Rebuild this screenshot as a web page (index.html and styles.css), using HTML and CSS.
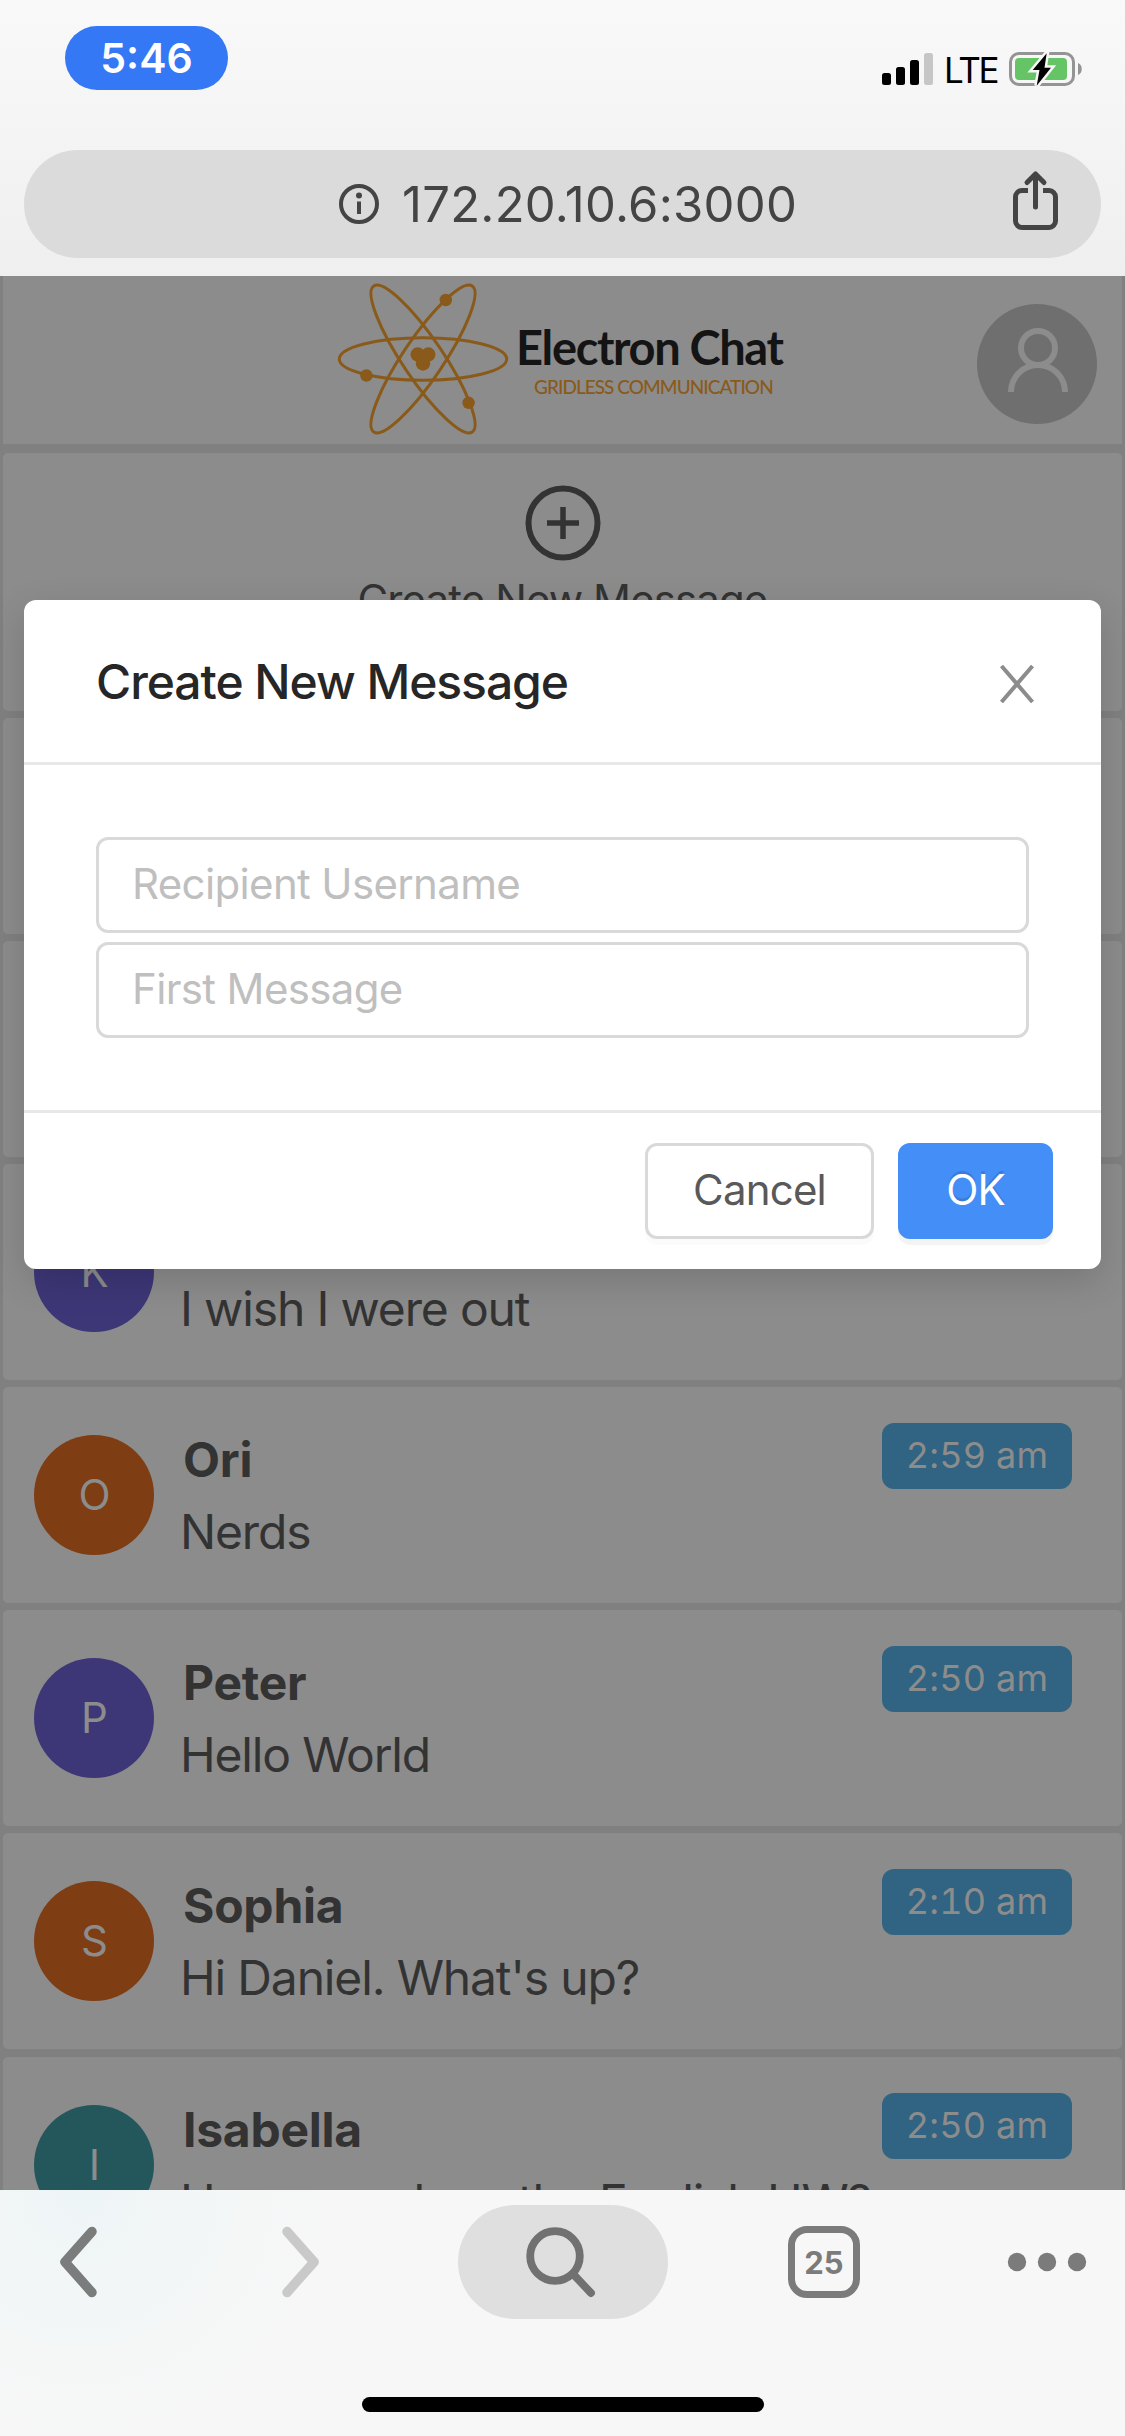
FILE: index.html
```html
<!DOCTYPE html>
<html lang="en">
<head>
<meta charset="utf-8">
<title>Electron Chat</title>
<link rel="stylesheet" href="styles.css">
</head>
<body>
<div class="phone">
  <header class="chrome">
    <div class="status">
      <span class="clock">5:46</span>
      <div class="status-right">
        <svg class="signal" width="52" height="34" viewBox="0 0 52 34">
          <rect x="0" y="21" width="9" height="12" rx="2.500"/>
          <rect x="14" y="15" width="9" height="18" rx="2.500"/>
          <rect x="28" y="8" width="9" height="25" rx="2.500"/>
          <rect x="42" y="1" width="9" height="32" rx="2.500" fill="#c6c6c6"/>
        </svg>
        <span class="lte">LTE</span>
        <svg class="battery" width="74" height="36" viewBox="0 0 74 36">
          <rect x="1.500" y="2.500" width="63" height="31" rx="8.500" fill="none" stroke="#949494" stroke-width="3"/>
          <path d="M69 12c5 1.500 5 10.500 0 12z" fill="#949494"/>
          <rect x="6" y="7" width="52" height="22" rx="4" fill="#65c466"/>
          <path d="M37.700 2.300L23.700 19H30.500L27.700 34.700L42 16.700H35.500Z" fill="#000" stroke="#f7f7f7" stroke-width="5" paint-order="stroke"/>
        </svg>
      </div>
    </div>
    <div class="urlbar">
      <svg class="info" width="42" height="42" viewBox="0 0 42 42">
        <circle cx="21" cy="21" r="18" fill="none" stroke="#444" stroke-width="4"/>
        <circle cx="21" cy="12.500" r="3" fill="#444"/>
        <path d="M21 18.500v12.500" stroke="#444" stroke-width="4"/>
      </svg>
      <span class="url">172.20.10.6:3000</span>
      <svg class="share" width="48" height="62" viewBox="0 0 48 62" fill="none" stroke="#444" stroke-width="5">
        <path d="M17 20.500H11a6.500 6.500 0 0 0-6.500 6.500v24a6.500 6.500 0 0 0 6.500 6.500h27a6.500 6.500 0 0 0 6.500-6.500V27a6.500 6.500 0 0 0-6.500-6.500H32"/>
        <path d="M24.500 37V4M16 12.500L24.500 4l8.500 8.500" stroke-linecap="round" stroke-linejoin="round"/>
      </svg>
    </div>
  </header>

  <main class="page">
    <div class="brandbar">
      <div class="brand">
        <svg class="atom" width="172" height="154" viewBox="-86 -77 172 154">
          <g fill="none" stroke="#8a5a1a" stroke-width="3">
            <ellipse rx="83.700" ry="21.300"/>
            <ellipse rx="88" ry="20.200" transform="rotate(56)"/>
            <ellipse rx="88" ry="20.200" transform="rotate(-56)"/>
          </g>
          <g fill="#8a5a1a">
            <circle cx="22.800" cy="-59" r="6.200"/>
            <circle cx="-56.600" cy="16.500" r="6.200"/>
            <circle cx="45.600" cy="43.800" r="6.200"/>
            <circle cx="-5.300" cy="-4.500" r="7.200"/>
            <circle cx="5.300" cy="-4.500" r="7.200"/>
            <circle cx="0" cy="4.500" r="7.200"/>
          </g>
        </svg>
        <div class="brand-words">
          <div class="brand-name">Electron Chat</div>
          <div class="brand-tag">GRIDLESS COMMUNICATION</div>
        </div>
      </div>
      <svg class="profile" width="120" height="120" viewBox="0 0 120 120">
        <circle cx="60" cy="60" r="60" fill="#6f6f6f"/>
        <g fill="none" stroke="#8c8c8c" stroke-width="6">
          <circle cx="61" cy="44" r="17"/>
          <path d="M34 88a27 27 0 0 1 54 0"/>
        </g>
      </svg>
    </div>

    <section class="card create">
      <svg width="76" height="76" viewBox="0 0 76 76">
        <circle cx="38" cy="38" r="34.500" fill="none" stroke="#333" stroke-width="6"/>
        <path d="M22 38h32M38 22v32" stroke="#333" stroke-width="5.500"/>
      </svg>
      <div class="create-label">Create New Message</div>
    </section>

    <section class="card"></section>
    <section class="card"></section>
    <section class="card">
      <div class="avatar purple">K</div>
      <div class="text"><div class="name">Kevin</div><div class="msg">I wish I were out</div></div>
    </section>
    <section class="card">
      <div class="avatar orange">O</div>
      <div class="text"><div class="name">Ori</div><div class="msg">Nerds</div></div>
      <div class="time">2:59 am</div>
    </section>
    <section class="card">
      <div class="avatar purple">P</div>
      <div class="text"><div class="name">Peter</div><div class="msg">Hello World</div></div>
      <div class="time">2:50 am</div>
    </section>
    <section class="card">
      <div class="avatar orange">S</div>
      <div class="text"><div class="name">Sophia</div><div class="msg">Hi Daniel. What's up?</div></div>
      <div class="time">2:10 am</div>
    </section>
    <section class="card last">
      <div class="avatar teal">I</div>
      <div class="text"><div class="name">Isabella</div><div class="msg">Have you done the English HW?</div></div>
      <div class="time">2:50 am</div>
    </section>
  </main>

  <div class="modal">
    <div class="modal-head">
      <div class="modal-title">Create New Message</div>
      <svg class="close" width="36" height="38" viewBox="0 0 36 38">
        <path d="M2.500 1L33.500 37M33.500 1L2.500 37" stroke="#8c8c8c" stroke-width="4"/>
      </svg>
    </div>
    <div class="modal-body">
      <input class="field" placeholder="Recipient Username">
      <input class="field" placeholder="First Message">
    </div>
    <div class="modal-foot">
      <button class="btn cancel">Cancel</button>
      <button class="btn ok">OK</button>
    </div>
  </div>

  <footer class="toolbar">
    <div class="tools">
      <svg class="back" width="41" height="74" viewBox="0 0 41 74"><path d="M34 6.500L7 37l27 30.500" fill="none" stroke="#7b7d7c" stroke-width="9.500" stroke-linecap="round" stroke-linejoin="round"/></svg>
      <svg class="forward" width="41" height="74" viewBox="0 0 41 74"><path d="M7 6.500L34 37L7 67.500" fill="none" stroke="#c9c9c9" stroke-width="9.500" stroke-linecap="round" stroke-linejoin="round"/></svg>
      <div class="search">
        <svg width="72" height="72" viewBox="0 0 72 72"><g fill="none" stroke="#717171" stroke-width="7.800" stroke-linecap="round"><circle cx="30" cy="30" r="24.800"/><path d="M49 49l17 18"/></g></svg>
      </div>
      <div class="tabs">25</div>
      <svg class="more" width="80" height="20" viewBox="0 0 80 20" fill="#7b7b7b"><circle cx="10" cy="10" r="9.200"/><circle cx="40" cy="10" r="9.200"/><circle cx="70" cy="10" r="9.200"/></svg>
    </div>
    <div class="home"></div>
  </footer>
</div>
</body>
</html>
```

FILE: styles.css
```css
* { box-sizing: border-box; }

body {
  margin: 0;
  font-family: Inter, "Liberation Sans", sans-serif;
  color: #333;
}

.phone {
  position: relative;
  display: flex;
  flex-direction: column;
  width: 1125px;
  height: 2436px;
  overflow: hidden;
  background: #f7f7f7;
}

/* Browser chrome */
.chrome {
  flex: 0 0 276px;
  padding: 26px 24px 0;
  background: linear-gradient(#f9f9f9, #efefef);
}
.status {
  display: flex;
  justify-content: space-between;
  height: 124px;
  padding: 0 18px 0 41px;
}
.clock {
  width: 163px;
  height: 64px;
  border-radius: 32px;
  background: #3478f6;
  color: #fff;
  font-size: 41px;
  font-weight: 600;
  line-height: 64px;
  text-align: center;
}
.status-right {
  display: flex;
  align-items: flex-start;
  padding-top: 26px;
}
.lte {
  width: 57px;
  margin: 0 8px 0 10px;
  font-size: 35px;
  line-height: 37px;
  letter-spacing: -2.2px;
  color: #000;
}
.battery { margin-top: -1px; }
.urlbar {
  display: flex;
  align-items: center;
  height: 108px;
  padding: 0 42px 0 314px;
  border-radius: 54px;
  background: #dbdbdb;
}
.url {
  margin-left: 22px;
  font-size: 49px;
  letter-spacing: .25px;
  color: #444;
}
.share { margin: -6px 0 0 auto; }

/* Chat list */
.page {
  display: flex;
  flex: 1 1 0;
  flex-direction: column;
  gap: 7px;
  min-height: 0;
  overflow: hidden;
  padding: 0 3px;
  background: #808080;
}
.brandbar {
  display: flex;
  flex: 0 0 168px;
  justify-content: space-between;
  margin-bottom: 2px;
  padding-right: 25px;
  background: #8c8c8c;
}
.brand {
  display: flex;
  align-items: flex-start;
  padding: 6px 0 0 334px;
}
.brand-words {
  padding: 37px 0 0 7px;
  font-family: Lato, sans-serif;
  white-space: nowrap;
}
.brand-name {
  font-size: 47px;
  font-weight: 700;
  line-height: 56px;
  letter-spacing: -1.35px;
  color: #141414;
}
.brand-tag {
  padding-left: 18px;
  font-size: 19px;
  font-weight: 500;
  line-height: 24px;
  letter-spacing: -.95px;
  color: #8a5a1a;
}
.profile { margin-top: 28px; }
.card {
  display: flex;
  flex: 0 0 216px;
  align-items: flex-start;
  padding: 48px 50px 0 31px;
  border-radius: 5px;
  background: #8c8c8c;
}
.card.last { margin-top: 1px; }
.card.create {
  flex-basis: 258px;
  flex-direction: column;
  align-items: center;
  padding: 32px 0 0;
}
.create-label {
  margin-top: 13px;
  font-size: 42px;
  line-height: 52px;
  letter-spacing: -.9px;
}
.avatar {
  flex: 0 0 120px;
  height: 120px;
  border-radius: 50%;
  color: #8c8c8c;
  font-size: 42px;
  line-height: 120px;
  text-align: center;
  letter-spacing: -1px;
}
.purple { background: #3d3777; }
.orange { background: #7e3d13; }
.teal { background: #24575c; }
.text {
  flex: 1;
  min-width: 0;
  padding: 0 0 0 26px;
  white-space: nowrap;
}
.name {
  padding-left: 3px;
  margin-top: -5px;
  font-size: 48px;
  font-weight: 700;
  line-height: 60px;
  letter-spacing: -.25px;
}
.msg {
  margin-top: 12px;
  font-size: 48px;
  line-height: 60px;
  letter-spacing: -1.15px;
}
.time {
  flex: 0 0 190px;
  height: 66px;
  margin-top: -12px;
  border-radius: 12px;
  background: #306482;
  color: #8c8c8c;
  font-size: 36px;
  font-variant-numeric: tabular-nums;
  line-height: 65px;
  letter-spacing: .2px;
  text-align: center;
}

/* Dialog floats over the dimmed page */
.modal {
  position: absolute;
  top: 600px;
  left: 24px;
  display: flex;
  flex-direction: column;
  width: 1077px;
  height: 669px;
  border-radius: 12px;
  background: #fff;
  box-shadow: 0 12px 36px rgba(0, 0, 0, .15);
}
.modal-head {
  display: flex;
  flex: 0 0 165px;
  align-items: center;
  justify-content: space-between;
  padding: 0 66px 0 72px;
  border-bottom: 3px solid #e8e8e8;
}
.modal-title {
  font-size: 48px;
  font-weight: 500;
  letter-spacing: -1.05px;
  color: #262626;
}
.close { margin-top: 6px; }
.modal-body {
  display: flex;
  flex: 1;
  flex-direction: column;
  gap: 9px;
  padding: 72px;
}
.field {
  width: 933px;
  height: 96px;
  padding: 0 33px 3px;
  border: 3px solid #d9d9d9;
  border-radius: 12px;
  outline: 0;
  background: #fff;
  font: 42px Inter, "Liberation Sans", sans-serif;
  letter-spacing: -.65px;
}
.field::placeholder { color: #bfbfbf; }
.modal-foot {
  display: flex;
  flex: 0 0 159px;
  justify-content: flex-end;
  gap: 24px;
  padding: 30px 48px;
  border-top: 3px solid #e8e8e8;
}
.btn {
  height: 96px;
  padding: 0 0 3px;
  border: 3px solid #d9d9d9;
  border-radius: 12px;
  background: #fff;
  color: #595959;
  font: 42px Inter, "Liberation Sans", sans-serif;
  letter-spacing: -.8px;
}
.cancel {
  width: 229px;
  box-shadow: 0 6px 0 rgba(0, 0, 0, .016);
}
.ok {
  width: 155px;
  border-color: #448ef7;
  background: #448ef7;
  color: #fff;
  text-shadow: 0 -3px 0 rgba(0, 0, 0, .12);
  box-shadow: 0 6px 0 rgba(0, 0, 0, .045);
}

/* Bottom toolbar */
.toolbar {
  display: flex;
  flex: 0 0 246px;
  flex-direction: column;
  align-items: center;
  background: radial-gradient(circle at 80px 0, #eef5f6, rgba(247, 247, 247, 0) 240px), #f7f7f7;
}
.tools {
  display: flex;
  align-items: center;
  width: 100%;
  height: 114px;
  margin-top: 15px;
  padding-left: 58px;
}
.forward { margin-left: 181px; }
.search {
  display: flex;
  align-items: center;
  justify-content: center;
  width: 210px;
  height: 114px;
  margin-left: 137px;
  border-radius: 57px;
  background: #dfdfdf;
}
.search svg { margin-left: -4px; }
.tabs {
  width: 72px;
  height: 72px;
  margin-left: 120px;
  border: 7px solid #7b7b7b;
  border-radius: 19px;
  color: #7b7b7b;
  font-size: 31px;
  font-weight: 700;
  line-height: 59px;
  text-align: center;
}
.more { margin-left: 147px; }
.home {
  width: 402px;
  height: 15px;
  margin-top: 78px;
  border-radius: 8px;
  background: #000;
}
```
